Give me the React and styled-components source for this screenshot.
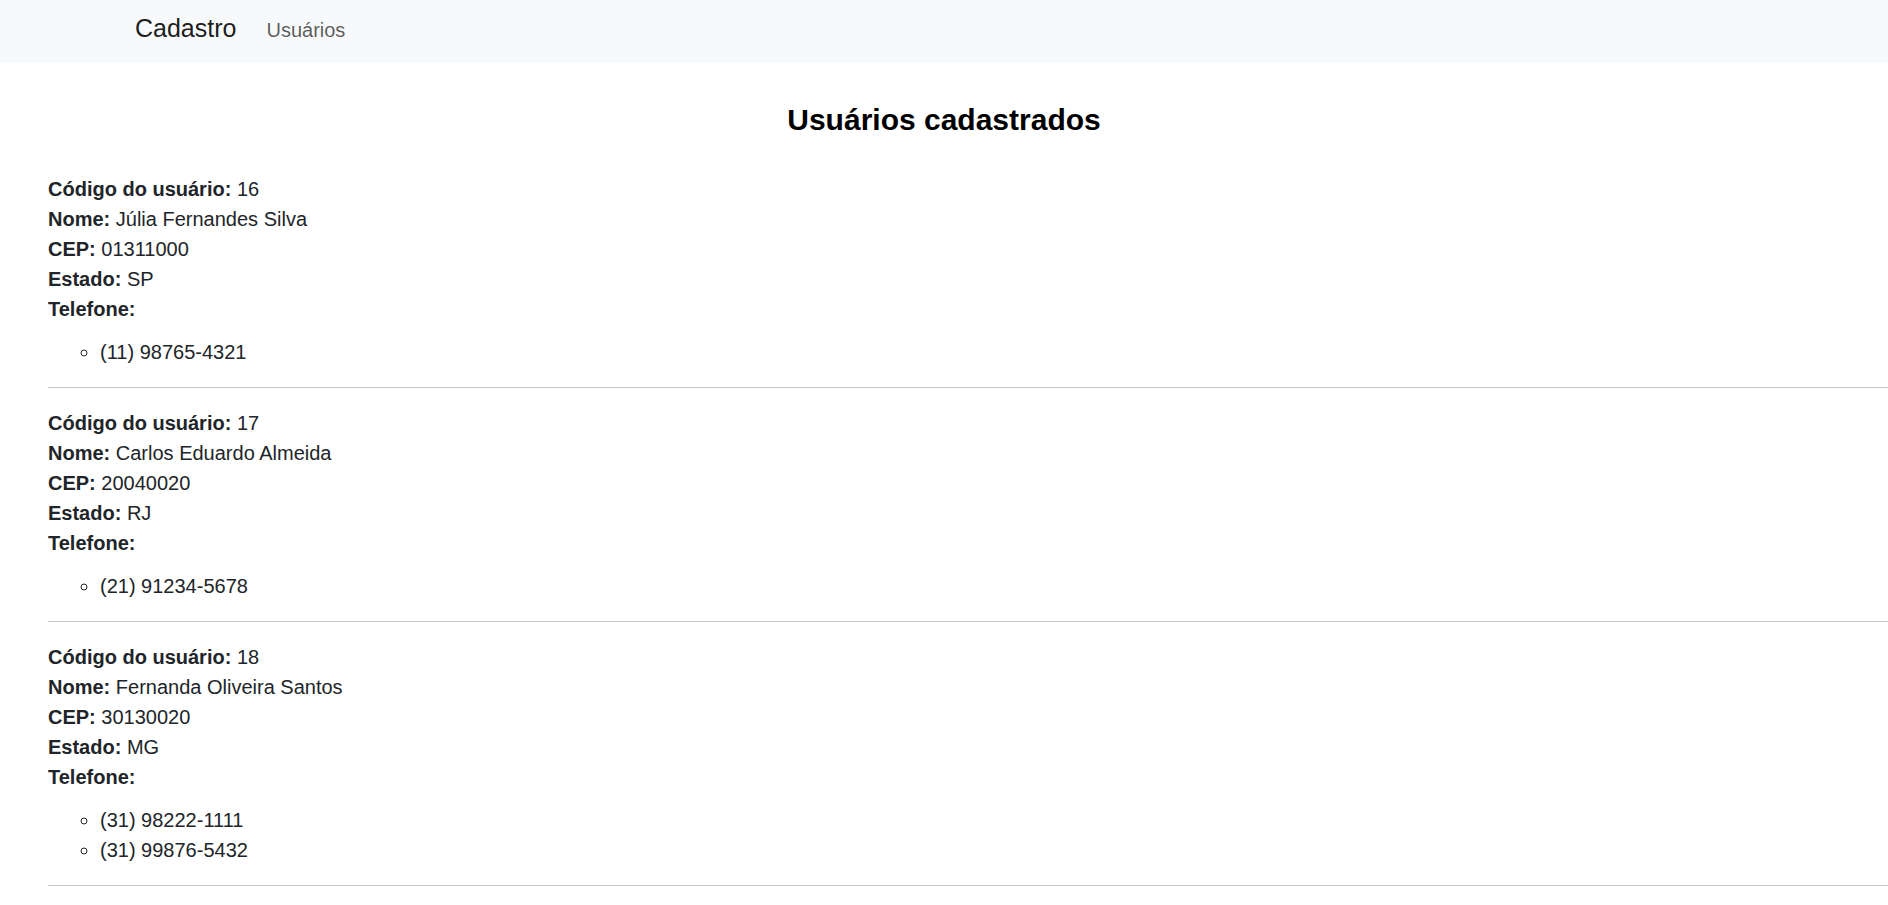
import React from 'react';
import styled, { createGlobalStyle } from 'styled-components';

const GlobalStyle = createGlobalStyle`
  html, body {
    margin: 0;
    padding: 0;
    background: #ffffff;
  }
  body {
    font-family: "Liberation Sans", Arial, sans-serif;
    font-size: 20px;
    line-height: 1.5;
    color: #212529;
  }
  * {
    box-sizing: border-box;
  }
`;

// Top navigation bar
const Navbar = styled.nav`
  height: 63px;
  background-color: #f8f9fa;
  display: flex;
  align-items: baseline;
  padding: 13px 0 0 135px;
`;

const Brand = styled.a`
  font-size: 25px;
  line-height: 30px;
  color: rgba(0, 0, 0, 0.9);
  text-decoration: none;
  margin-right: 30px;
`;

const NavLink = styled.a`
  font-size: 20px;
  line-height: 30px;
  color: rgba(0, 0, 0, 0.65);
  text-decoration: none;
`;

const Title = styled.h2`
  margin: 39px 0 36px;
  font-size: 30px;
  line-height: 36px;
  font-weight: 700;
  color: #000;
  text-align: center;
`;

const UserList = styled.section`
  padding-left: 48px;
`;

const UserCard = styled.div``;

const Field = styled.div`
  line-height: 30px;
`;

const Label = styled.strong`
  font-weight: 700;
`;

const PhoneList = styled.ul`
  margin: 13px 0 0;
  padding-left: 52px;
  list-style-type: circle;
`;

const Phone = styled.li`
  line-height: 30px;
`;

const Divider = styled.hr`
  margin: 20px 0 20px;
  border: 0;
  border-top: 1px solid #c5c6c7;
  height: 0;
`;

const users = [
  {
    id: 16,
    nome: 'Júlia Fernandes Silva',
    cep: '01311000',
    estado: 'SP',
    telefones: ['(11) 98765-4321']
  },
  {
    id: 17,
    nome: 'Carlos Eduardo Almeida',
    cep: '20040020',
    estado: 'RJ',
    telefones: ['(21) 91234-5678']
  },
  {
    id: 18,
    nome: 'Fernanda Oliveira Santos',
    cep: '30130020',
    estado: 'MG',
    telefones: ['(31) 98222-1111', '(31) 99876-5432']
  }
];

const App = () => {
  return (
    <>
      <GlobalStyle />
      <Navbar>
        <Brand href="#">Cadastro</Brand>
        <NavLink href="#">Usuários</NavLink>
      </Navbar>

      <Title>Usuários cadastrados</Title>

      <UserList>
        {users.map(user => (
          <UserCard key={user.id}>
            <Field><Label>Código do usuário:</Label> {user.id}</Field>
            <Field><Label>Nome:</Label> {user.nome}</Field>
            <Field><Label>CEP:</Label> {user.cep}</Field>
            <Field><Label>Estado:</Label> {user.estado}</Field>
            <Field><Label>Telefone:</Label></Field>
            <PhoneList>
              {user.telefones.map(tel => (
                <Phone key={tel}>{tel}</Phone>
              ))}
            </PhoneList>
            <Divider />
          </UserCard>
        ))}
      </UserList>
    </>
  );
};

export default App;
